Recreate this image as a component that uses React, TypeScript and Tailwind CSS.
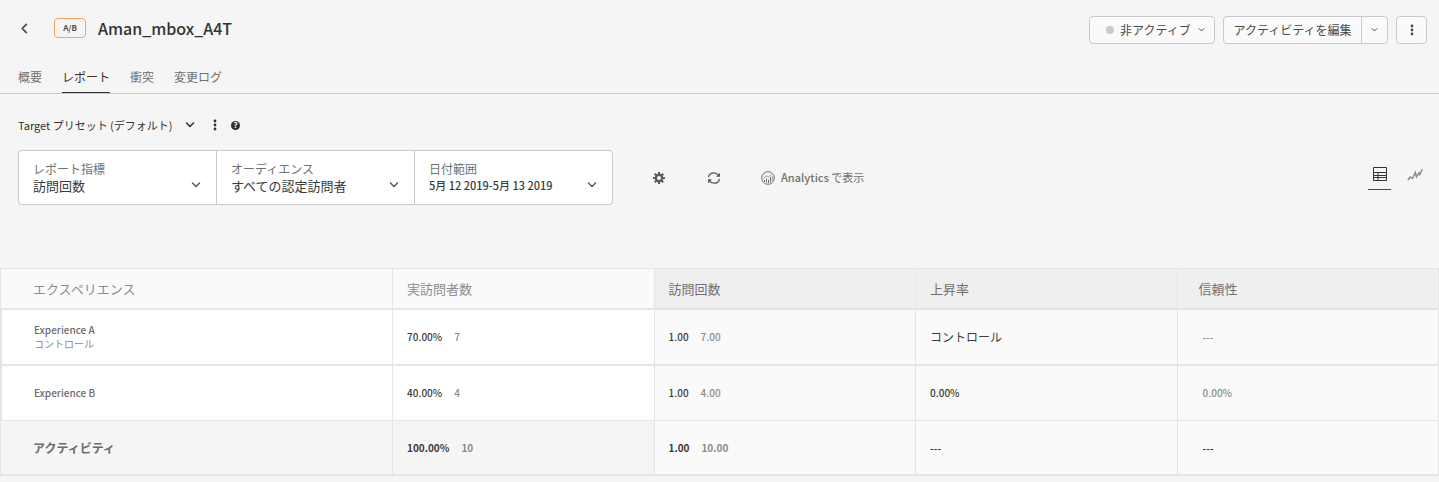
import { ReactNode } from "react";

const Chevron = ({ className = "" }: { className?: string }) => (
  <svg viewBox="0 0 10 6" className={className} fill="none" stroke="currentColor" strokeWidth="1.5" strokeLinecap="round" strokeLinejoin="round" aria-hidden="true">
    <path d="M1.5 1 5 4.500 8.500 1" />
  </svg>
);

const Dots = () => (
  <svg viewBox="0 0 4 12" className="h-3 w-1" fill="currentColor" aria-hidden="true">
    <circle cx="2" cy="2" r="1.4" />
    <circle cx="2" cy="6" r="1.4" />
    <circle cx="2" cy="10" r="1.4" />
  </svg>
);

const GearIcon = () => (
  <svg viewBox="0 0 12 12" className="h-3 w-3" aria-hidden="true">
    <path stroke="currentColor" strokeWidth="2.2" d="M6 0v12M0 6h12M1.800 1.800l8.400 8.400M10.200 1.800 1.800 10.200" />
    <circle cx="6" cy="6" r="4.300" fill="currentColor" />
    <circle cx="6" cy="6" r="2" fill="#f5f5f5" />
  </svg>
);

const RefreshIcon = () => (
  <svg viewBox="0 0 14 14" className="h-3.5 w-3.5" aria-hidden="true">
    <g fill="none" stroke="currentColor" strokeWidth="1.3">
      <path d="M1.500 6.200C1.900 3.700 4.200 1.800 7 1.800c1.900 0 3.500.9 4.500 2.400" />
      <path d="M12.500 7.800C12.100 10.300 9.800 12.200 7 12.200c-1.900 0-3.500-.9-4.500-2.400" />
    </g>
    <path d="M13 1.800V5.800H9zM1 12.200V8.200h4z" fill="currentColor" />
  </svg>
);

const AnalyticsIcon = () => (
  <svg viewBox="0 0 14 14" className="h-3.5 w-3.5" fill="none" stroke="currentColor" aria-hidden="true">
    <circle cx="7" cy="7" r="6.300" strokeWidth="1" />
    <path d="M3.500 11V9M5.500 11.500V7.500M7.500 12V8.500M9.500 11.500V6" strokeWidth="1" />
    <path d="M2.500 7.500 5.300 4.800l2 1.400L10.500 3.300M11.300 5v5" strokeWidth="0.7" />
  </svg>
);

const TableIcon = () => (
  <svg viewBox="0 0 16 15" className="h-[15px] w-4" fill="none" stroke="currentColor" aria-hidden="true">
    <path d="M1.500.5h13v13h-13zM1.500 5.500h13M1.500 8.500h13M1.500 10.500h13M6 5.500v8" />
  </svg>
);

const TrendIcon = () => (
  <svg viewBox="0 0 16 13" className="h-[13px] w-4" fill="none" stroke="currentColor" strokeWidth="1.500" strokeLinejoin="miter" aria-hidden="true">
    <path d="M.8 12 3.300 9l2.200 1.500L8.300 4.500l1.200 4.300L12 5l.8 1.500L15.200 1.200" />
  </svg>
);

const fieldBox = "relative flex w-[198px] flex-col justify-center border-r border-[#cacaca] px-3.5 pb-0.5";

function SelectField({ id, label, value }: { id: string; label: string; value: string }) {
  return (
    <div className={fieldBox}>
      <label htmlFor={id} className="text-xs leading-[17px] text-[#707070]">{label}</label>
      <select id={id} className="w-full appearance-none bg-transparent text-[13px] leading-[17px] text-[#3a3a3a]">
        <option>{value}</option>
      </select>
      <Chevron className="pointer-events-none absolute right-[15px] top-[31px] h-1.5 w-2.5 text-[#5a5a5a]" />
    </div>
  );
}

const tabs = ["概要", "レポート", "衝突", "変更ログ"];

function Pair({ main, sub }: { main: string; sub: string }) {
  return (
    <span className="flex items-center gap-3">
      <span className="text-[#3c3c3c]">{main}</span>
      <span className="text-[#8c8c8c]">{sub}</span>
    </span>
  );
}

type Row = { name: ReactNode; visitors: [string, string]; visits: [string, string]; lift: ReactNode; confidence: ReactNode; total?: boolean };

const rows: Row[] = [
  {
    name: (
      <>
        <span className="block leading-[14px]">Experience A</span>
        <span className="block font-normal leading-[14px] text-[#8c8c8c]">コントロール</span>
      </>
    ),
    visitors: ["70.00%", "7"],
    visits: ["1.00", "7.00"],
    lift: <span className="text-xs font-normal">コントロール</span>,
    confidence: <span className="text-[#8c8c8c]">---</span>,
  },
  { name: "Experience B", visitors: ["40.00%", "4"], visits: ["1.00", "4.00"], lift: "0.00%", confidence: <span className="text-[#8c8c8c]">0.00%</span> },
  { name: <span className="text-xs">アクティビティ</span>, visitors: ["100.00%", "10"], visits: ["1.00", "10.00"], lift: "---", confidence: "---", total: true },
];

const headers = ["エクスペリエンス", "実訪問者数", "訪問回数", "上昇率", "信頼性"];

function headClass(i: number) {
  if (i === 0) return "border-l bg-[#fafafa] pl-8 text-[#8c8c8c]";
  if (i === 1) return "bg-[#fafafa] pl-3.5 text-[#8c8c8c]";
  if (i === 4) return "bg-[#efefef] pl-[21px] text-[#707070]";
  return "bg-[#efefef] pl-3.5 text-[#707070]";
}

export default function App() {
  return (
    <div className="min-h-screen bg-[#f5f5f5] font-['Noto_Sans_CJK_JP',sans-serif] text-xs text-[#4b4b4b]">
      <header className="flex items-start justify-between pl-[18px] pr-3 pt-4">
        <div className="flex h-6 items-center">
          <button aria-label="戻る" className="flex h-6 w-3 items-center justify-center text-[#4b4b4b]">
            <Chevron className="h-[7px] w-3 rotate-90" />
          </button>
          <span className="ml-6 flex h-5 w-8 items-center justify-center rounded border border-[#f9a55b] text-[8px] font-bold">A/B</span>
          <h1 className="ml-3 text-base font-medium leading-6 text-[#323232]">Aman_mbox_A4T</h1>
        </div>
        <div className="flex h-7 gap-2">
          <button className="flex w-[126px] items-center rounded border border-[#cacaca] bg-[#fafafa] pl-4">
            <span className="mr-1.5 h-2 w-2 rounded-full bg-[#cacaca]" />
            非アクティブ
            <Chevron className="ml-[7px] h-1 w-[7px]" />
          </button>
          <div className="flex w-[165px] rounded border border-[#cacaca] bg-[#fafafa]">
            <button className="flex-1 whitespace-nowrap">アクティビティを編集</button>
            <button aria-label="その他の編集オプション" className="flex w-[26px] items-center justify-center border-l border-[#cacaca]">
              <Chevron className="h-1 w-[7px]" />
            </button>
          </div>
          <button aria-label="メニュー" className="flex w-[31px] items-center justify-center rounded border border-[#cacaca] bg-[#fafafa]">
            <Dots />
          </button>
        </div>
      </header>

      <nav className="mt-5 flex gap-5 border-b border-[#cacaca] pl-[18px]">
        {tabs.map((t, i) => (
          <a key={t} href="#" className={i === 1 ? "h-[29px] border-b border-[#323232] pt-1 leading-[18px] text-[#323232]" : "h-[29px] pt-1 leading-[18px] text-[#707070]"}>
            {t}
          </a>
        ))}
      </nav>

      <div className="mt-[21px] flex h-5 items-center pl-[18px] text-[#323232]">
        <select aria-label="プリセット" className="appearance-none bg-transparent text-[11px] leading-5">
          <option>Target プリセット (デフォルト)</option>
        </select>
        <Chevron className="ml-3 h-1.5 w-2.5" />
        <button aria-label="プリセットメニュー" className="ml-4 flex h-5 w-2 items-center justify-center"><Dots /></button>
        <button aria-label="ヘルプ" className="ml-3 flex h-[9px] w-[9px] items-center justify-center rounded-full bg-[#323232] text-[8px] font-bold leading-none text-white">?</button>
      </div>

      <div className="mt-[15px] flex items-center pl-[18px] pr-4">
        <div className="flex h-[55px] rounded border border-r-0 border-[#cacaca] bg-white">
          <SelectField id="metric" label="レポート指標" value="訪問回数" />
          <SelectField id="audience" label="オーディエンス" value="すべての認定訪問者" />
          <button className={fieldBox + " rounded-r text-left"}>
            <span className="text-xs leading-[17px] text-[#707070]">日付範囲</span>
            <span className="text-[11px] font-medium leading-[17px] text-[#3a3a3a]">5月 12 2019-5月 13 2019</span>
            <Chevron className="absolute right-[15px] top-[31px] h-1.5 w-2.5 text-[#5a5a5a]" />
          </button>
        </div>
        <button aria-label="設定" className="ml-10 text-[#5a5a5a]"><GearIcon /></button>
        <button aria-label="更新" className="ml-[42px] text-[#5a5a5a]"><RefreshIcon /></button>
        <a href="#" className="ml-10 flex items-center gap-1.5 text-[11px] text-[#707070]">
          <AnalyticsIcon />
          <span><span className="font-medium">Analytics</span> で表示</span>
        </a>
        <div className="ml-auto flex gap-4">
          <button aria-label="テーブル表示" className="flex h-[25px] w-[23px] items-start justify-center border-b border-[#4b4b4b] pt-0.5 text-[#323232]"><TableIcon /></button>
          <button aria-label="グラフ表示" className="flex h-[25px] items-start pt-[3px] text-[#8c8c8c]"><TrendIcon /></button>
        </div>
      </div>

      <table className="mt-[63px] w-full table-fixed border-separate border-spacing-0 text-left">
        <colgroup>
          <col className="w-[393px]" />
          <col />
          <col />
          <col />
          <col />
        </colgroup>
        <thead>
          <tr className="h-[42px]">
            {headers.map((h, i) => (
              <th key={h} scope="col" className={"border-b-2 border-r border-t border-[#e5e5e5] p-0 text-[13px] font-normal " + headClass(i)}>{h}</th>
            ))}
          </tr>
        </thead>
        <tbody className="text-[10px] font-medium">
          {rows.map((r, i) => {
            const line = "border-r border-[#e5e5e5] p-0 " + (i === 1 ? "border-b " : "border-b-2 ") + (r.total ? "font-bold " : "");
            const left = r.total ? "bg-[#f5f5f5] " : "bg-white ";
            return (
              <tr key={i} className={i === 0 ? "h-14" : "h-[55px]"}>
                <th scope="row" className={line + left + (r.total ? "border-l pl-8 text-[#6b6b6b]" : "border-l-2 pl-8 font-medium text-[#6b6b6b]")}>{r.name}</th>
                <td className={line + left + "pl-3.5"}><Pair main={r.visitors[0]} sub={r.visitors[1]} /></td>
                <td className={line + "bg-[#fafafa] pl-3.5"}><Pair main={r.visits[0]} sub={r.visits[1]} /></td>
                <td className={line + "bg-[#fafafa] pl-3.5 text-[#3c3c3c]"}>{r.lift}</td>
                <td className={line + "bg-[#fafafa] pl-[25px] text-[#3c3c3c]"}>{r.confidence}</td>
              </tr>
            );
          })}
        </tbody>
      </table>
    </div>
  );
}
